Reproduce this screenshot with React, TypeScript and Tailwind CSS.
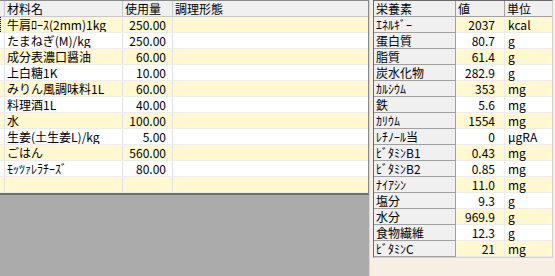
const ingredients: [string, string][] = [
  ['牛肩ﾛｰｽ(2mm)1kg', '250.00'],
  ['たまねぎ(M)/kg', '250.00'],
  ['成分表濃口醤油', '60.00'],
  ['上白糖1K', '10.00'],
  ['みりん風調味料1L', '60.00'],
  ['料理酒1L', '40.00'],
  ['水', '100.00'],
  ['生姜(土生姜L)/kg', '5.00'],
  ['ごはん', '560.00'],
  ['ﾓｯﾂｧﾚﾗﾁｰｽﾞ', '80.00'],
  ['', ''],
];

const nutrients: [string, string, string][] = [
  ['ｴﾈﾙｷﾞｰ', '2037', 'kcal'],
  ['蛋白質', '80.7', 'g'],
  ['脂質', '61.4', 'g'],
  ['炭水化物', '282.9', 'g'],
  ['ｶﾙｼｳﾑ', '353', 'mg'],
  ['鉄', '5.6', 'mg'],
  ['ｶﾘｳﾑ', '1554', 'mg'],
  ['ﾚﾁﾉｰﾙ当', '0', 'μgRA'],
  ['ﾋﾞﾀﾐﾝB1', '0.43', 'mg'],
  ['ﾋﾞﾀﾐﾝB2', '0.85', 'mg'],
  ['ﾅｲｱｼﾝ', '11.0', 'mg'],
  ['塩分', '9.3', 'g'],
  ['水分', '969.9', 'g'],
  ['食物繊維', '12.3', 'g'],
  ['ﾋﾞﾀﾐﾝC', '21', 'mg'],
];

const font = { fontFamily: '"Noto Sans CJK JP", "Liberation Sans", sans-serif' };

export default function App() {
  return (
    <div className="flex w-[555px] h-[276px] overflow-hidden text-[12px] leading-[15px] text-black" style={font}>
      {/* Ingredient grid */}
      <div className="flex flex-col w-[370px] h-full bg-[#ababab] border-r border-[#d8d8d8]">
        <div className="flex flex-col w-[369px] bg-white border-t border-r border-[#8a8a8a] border-b-2 border-b-[#707070]">
          <div className="grid grid-cols-[5px_118px_50px_1fr] h-[16px] bg-[#f0f0f0] border-b border-[#c8c8c8]">
            <div className="border-r border-[#c8c8c8]" />
            <div className="pl-[2px] border-r border-[#c8c8c8]">材料名</div>
            <div className="pl-[2px] border-r border-[#c8c8c8]">使用量</div>
            <div className="pl-[2px]">調理形態</div>
          </div>
          {ingredients.map(([name, qty], i) => (
            <div
              key={i}
              className={`grid grid-cols-[5px_118px_50px_1fr] h-[16px] border-b border-[#ececec] ${i % 2 === 0 ? 'bg-[#fff8d0]' : 'bg-white'}`}
            >
              <div className={`border-r border-[#e2e2e2] ${i === 0 ? 'border-l border-dotted border-l-black' : ''}`} />
              <div className="pl-[2px] border-r border-[#e2e2e2] whitespace-nowrap overflow-hidden">{name}</div>
              <div className="pr-[6px] text-right border-r border-[#e2e2e2]">{qty}</div>
              <div />
            </div>
          ))}
        </div>
      </div>

      {/* Nutrient grid */}
      <div className="flex-1 h-full bg-[#f8efe4] pl-[3px] pt-0">
        <div className="w-[180px] flex flex-col border-l border-t border-[#6a6a6a] border-r border-r-[#d0d0d0] border-b border-b-[#d0d0d0]">
          <div className="grid grid-cols-[82px_49px_1fr] h-[16px] bg-[#f0f0f0] border-b border-[#a0a0a0]">
            <div className="pl-[2px] border-r border-[#a0a0a0]">栄養素</div>
            <div className="pl-[2px] border-r border-[#a0a0a0]">値</div>
            <div className="pl-[2px]">単位</div>
          </div>
          {nutrients.map(([name, val, unit], i) => (
            <div key={name} className="grid grid-cols-[82px_49px_1fr] h-[16px]">
              <div className="pl-[2px] bg-[#f0f0f0] border-r border-b border-[#a0a0a0] whitespace-nowrap">{name}</div>
              <div className={`pr-[9px] text-right border-r border-b border-[#ececec] ${i % 2 === 0 ? 'bg-[#fff8d0]' : 'bg-white'}`}>{val}</div>
              <div className={`pl-[3px] border-b border-[#ececec] ${i % 2 === 0 ? 'bg-[#fff8d0]' : 'bg-white'}`}>{unit}</div>
            </div>
          ))}
        </div>
      </div>
    </div>
  );
}
